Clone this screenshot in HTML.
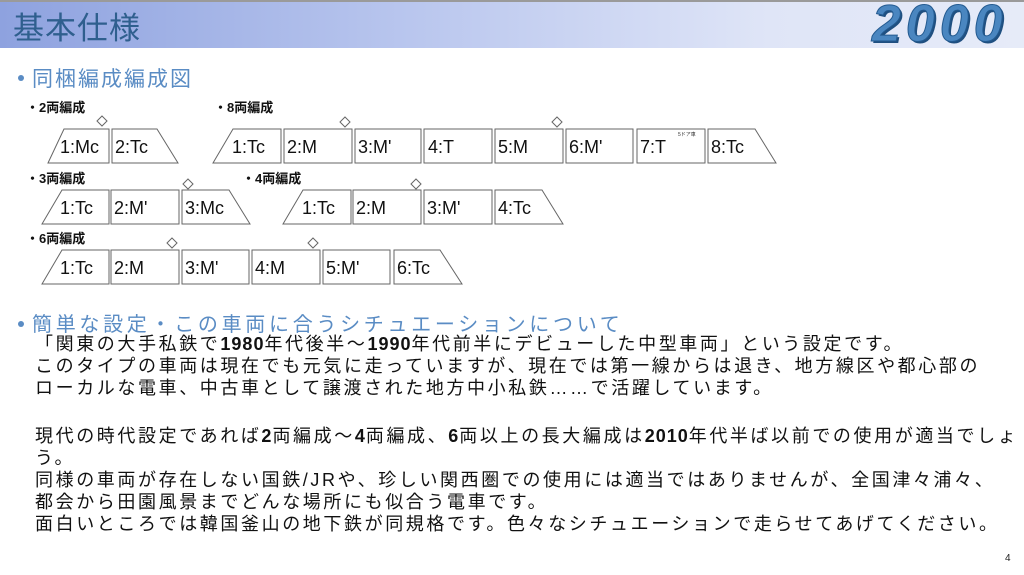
<!DOCTYPE html>
<html><head><meta charset="utf-8"><style>
*{margin:0;padding:0}
body{width:1024px;height:575px;overflow:hidden;background:#fff;position:relative;font-family:"Liberation Sans","Noto Sans CJK JP",sans-serif}
.hdr{position:absolute;left:0;top:0;width:1024px;height:48px;background:linear-gradient(90deg,#8ea2df 0%,#b9c6ee 40%,#dfe5f7 75%,#e6ebf8 100%);border-top:2px solid #9a9a9a;box-sizing:border-box}
.ttl{position:absolute;left:13px;top:3px;font-size:31px;color:#2f5f8e;letter-spacing:1px}
.num{position:absolute;left:872px;top:-6px;font-size:52px;font-style:italic;font-weight:bold;color:#4a86c0;text-shadow:2px 2px 0 #1f4f80;-webkit-text-stroke:1px #235a90;letter-spacing:5px}
.b1{position:absolute;left:18px;top:63px;font-size:21px;color:#5a8cc4;letter-spacing:2px}
.b2{position:absolute;left:18px;top:308px;font-size:20px;color:#5a8cc4;letter-spacing:3.7px}
.dot{display:inline-block;width:6px;height:6px;border-radius:3px;background:#5a8cc4;margin-right:8px;vertical-align:middle;position:relative;top:-2px}
.body{position:absolute;left:35px;font-size:18px;color:#111;white-space:nowrap;letter-spacing:2.6px}
.body b{letter-spacing:1px}
.pg{position:absolute;left:1005px;top:553px;font-size:10px;color:#222}
</style></head><body>
<div class="hdr"></div>
<div class="ttl">基本仕様</div>
<div class="num">2000</div>
<div class="b1"><span class="dot"></span>同梱編成編成図</div>
<svg style="position:absolute;left:0;top:0" width="1024" height="300" font-family="Liberation Sans, Noto Sans CJK JP, sans-serif">
<g font-size="13" font-weight="bold" fill="#111">
<text x="26" y="112">・2両編成</text>
<text x="214" y="112">・8両編成</text>
<text x="26" y="183">・3両編成</text>
<text x="242" y="183">・4両編成</text>
<text x="26" y="243">・6両編成</text>
</g>
<g fill="#fff" stroke="#666" stroke-width="1">
<polygon points="48,163 64,129 109,129 109,163"/>
<polygon points="112,129 157,129 178,163 112,163"/>
<polygon points="213,163 233,129 281,129 281,163"/>
<rect x="284" y="129" width="68" height="34"/>
<rect x="355" y="129" width="66" height="34"/>
<rect x="424" y="129" width="68" height="34"/>
<rect x="495" y="129" width="68" height="34"/>
<rect x="566" y="129" width="67" height="34"/>
<rect x="637" y="129" width="68" height="34"/>
<polygon points="708,129 755,129 776,163 708,163"/>
<polygon points="42,224 62,190 109,190 109,224"/>
<rect x="111" y="190" width="68" height="34"/>
<polygon points="182,190 229,190 250,224 182,224"/>
<polygon points="283,224 303,190 351,190 351,224"/>
<rect x="353" y="190" width="68" height="34"/>
<rect x="424" y="190" width="68" height="34"/>
<polygon points="495,190 542,190 563,224 495,224"/>
<polygon points="42,284 62,250 109,250 109,284"/>
<rect x="111" y="250" width="68" height="34"/>
<rect x="182" y="250" width="67" height="34"/>
<rect x="252" y="250" width="68" height="34"/>
<rect x="323" y="250" width="67" height="34"/>
<polygon points="394,250 440,250 462,284 394,284"/>
<polygon points="102,116 107,121 102,126 97,121"/>
<polygon points="345,117 350,122 345,127 340,122"/>
<polygon points="557,117 562,122 557,127 552,122"/>
<polygon points="188,179 193,184 188,189 183,184"/>
<polygon points="416,179 421,184 416,189 411,184"/>
<polygon points="172,238 177,243 172,248 167,243"/>
<polygon points="313,238 318,243 313,248 308,243"/>
</g>
<g font-size="18" fill="#111">
<text x="60" y="153">1:Mc</text><text x="115" y="153">2:Tc</text>
<text x="232" y="153">1:Tc</text><text x="287" y="153">2:M</text><text x="358" y="153">3:M'</text><text x="428" y="153">4:T</text><text x="498" y="153">5:M</text><text x="569" y="153">6:M'</text><text x="640" y="153">7:T</text><text x="711" y="153">8:Tc</text>
<text x="60" y="214">1:Tc</text><text x="114" y="214">2:M'</text><text x="185" y="214">3:Mc</text>
<text x="302" y="214">1:Tc</text><text x="356" y="214">2:M</text><text x="427" y="214">3:M'</text><text x="498" y="214">4:Tc</text>
<text x="60" y="274">1:Tc</text><text x="114" y="274">2:M</text><text x="185" y="274">3:M'</text><text x="255" y="274">4:M</text><text x="326" y="274">5:M'</text><text x="397" y="274">6:Tc</text>
</g>
<text x="678" y="136" font-size="5" fill="#333">5ドア車</text>
</svg>
<div class="b2"><span class="dot"></span>簡単な設定・この車両に合うシチュエーションについて</div>
<div class="body" style="top:330px">「関東の大手私鉄で<b>1980</b>年代後半～<b>1990</b>年代前半にデビューした中型車両」という設定です。</div>
<div class="body" style="top:352px">このタイプの車両は現在でも元気に走っていますが、現在では第一線からは退き、地方線区や都心部の</div>
<div class="body" style="top:374px">ローカルな電車、中古車として譲渡された地方中小私鉄……で活躍しています。</div>
<div class="body" style="top:422px">現代の時代設定であれば<b>2</b>両編成～<b>4</b>両編成、<b>6</b>両以上の長大編成は<b>2010</b>年代半ば以前での使用が適当でしょ</div>
<div class="body" style="top:444px">う。</div>
<div class="body" style="top:466px">同様の車両が存在しない国鉄/JRや、珍しい関西圏での使用には適当ではありませんが、全国津々浦々、</div>
<div class="body" style="top:488px">都会から田園風景までどんな場所にも似合う電車です。</div>
<div class="body" style="top:510px">面白いところでは韓国釜山の地下鉄が同規格です。色々なシチュエーションで走らせてあげてください。</div>
<div class="pg">4</div>
</body></html>
